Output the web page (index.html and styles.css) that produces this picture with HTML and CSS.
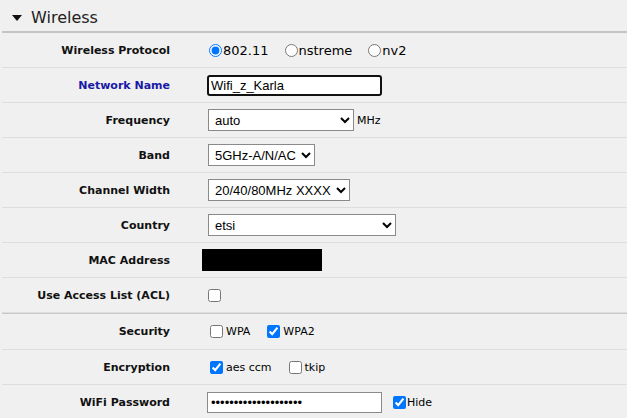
FILE: index.html
```html
<!DOCTYPE html>
<html lang="en">
<head>
    <meta charset="UTF-8">
    <title>Wireless</title>
    <link rel="stylesheet" href="styles.css">
</head>
<body>
    <div class="section-head">
        <span class="caret"></span>
        <span class="section-title">Wireless</span>
    </div>

    <div class="form">
        <div class="row">
            <label class="label">Wireless Protocol</label>
            <div class="field">
                <label class="opt"><input type="radio" name="proto" checked>802.11</label>
                <label class="opt"><input type="radio" name="proto">nstreme</label>
                <label class="opt"><input type="radio" name="proto">nv2</label>
            </div>
        </div>
        <div class="row">
            <label class="label highlight">Network Name</label>
            <div class="field">
                <input type="text" class="text-input focused" value="Wifi_z_Karla">
            </div>
        </div>
        <div class="row">
            <label class="label">Frequency</label>
            <div class="field">
                <select class="select sel-freq"><option>auto</option></select>
                <span class="unit">MHz</span>
            </div>
        </div>
        <div class="row">
            <label class="label">Band</label>
            <div class="field">
                <select class="select"><option>5GHz-A/N/AC</option></select>
            </div>
        </div>
        <div class="row">
            <label class="label">Channel Width</label>
            <div class="field">
                <select class="select"><option>20/40/80MHz XXXX</option></select>
            </div>
        </div>
        <div class="row">
            <label class="label">Country</label>
            <div class="field">
                <select class="select sel-country"><option>etsi</option></select>
            </div>
        </div>
        <div class="row">
            <label class="label">MAC Address</label>
            <div class="field">
                <div class="redacted"></div>
            </div>
        </div>
        <div class="row">
            <label class="label">Use Access List (ACL)</label>
            <div class="field">
                <input type="checkbox" class="check">
            </div>
        </div>
        <div class="row group-start">
            <label class="label">Security</label>
            <div class="field small">
                <label class="opt"><input type="checkbox" class="check">WPA</label>
                <label class="opt"><input type="checkbox" class="check" checked>WPA2</label>
            </div>
        </div>
        <div class="row">
            <label class="label">Encryption</label>
            <div class="field small">
                <label class="opt"><input type="checkbox" class="check" checked>aes ccm</label>
                <label class="opt"><input type="checkbox" class="check">tkip</label>
            </div>
        </div>
        <div class="row">
            <label class="label">WiFi Password</label>
            <div class="field">
                <input type="password" class="text-input" value="xxxxxxxxxxxxxxxxxxxx">
                <label class="opt hide"><input type="checkbox" class="check" checked>Hide</label>
            </div>
        </div>
    </div>
</body>
</html>
```

FILE: styles.css
```css
* {
    box-sizing: border-box;
}

body {
    margin: 0;
    background-color: #f0f0f0;
    color: #000;
    font-family: "DejaVu Sans", Verdana, sans-serif;
    overflow: hidden;
}

/* Section header */
.section-head {
    height: 33px;
    display: flex;
    align-items: center;
    padding-left: 10px;
    padding-top: 4px;
    margin-left: 2px;
    border-bottom: 2px solid #c4c4c4;
}

.caret {
    width: 0;
    height: 0;
    border-left: 5px solid transparent;
    border-right: 5px solid transparent;
    border-top: 6px solid #111;
    margin-right: 9px;
    margin-top: 1px;
}

.section-title {
    font-size: 16px;
    color: #222;
}

/* Form rows */
.row {
    display: flex;
    align-items: center;
    height: 35px;
    margin-left: 2px;
    border-bottom: 1px solid #dedede;
}

.row.group-start {
    border-top: 1px solid #c8c8c8;
    height: 37px;
}

.label {
    width: 168px;
    flex-shrink: 0;
    text-align: right;
    font-size: 11px;
    font-weight: bold;
    color: #111;
}

.label.highlight {
    color: #1a1aa6;
}

.field {
    display: flex;
    align-items: center;
    padding-left: 37px;
    font-size: 13px;
}

.field.small {
    font-size: 11px;
}

.opt {
    display: flex;
    align-items: center;
    margin-right: 14px;
}

.opt input {
    margin: 0 1px 0 2px;
}

.field.small .opt input {
    margin: 0 3px 0 3px;
}

input[type="radio"] {
    width: 13px;
    height: 13px;
}

.check {
    width: 13px;
    height: 13px;
    margin: 0 0 0 1px;
}

.text-input {
    width: 175px;
    height: 21px;
    font-family: "Liberation Sans", Arial, sans-serif;
    font-size: 13px;
    border: 1px solid #8a8a8a;
    background: #fff;
    padding: 0 3px;
}

.text-input.focused {
    border: 2px solid #111;
    border-radius: 3px;
    padding: 0 2px;
}

.select {
    height: 22px;
    font-family: "Liberation Sans", Arial, sans-serif;
    font-size: 13px;
    border: 1px solid #8a8a8a;
    background: #fff;
    padding: 0 2px;
    margin-left: 1px;
}

.sel-freq {
    width: 146px;
}

.sel-country {
    width: 188px;
}

.unit {
    font-size: 11px;
    margin-left: 3px;
}

.redacted {
    width: 120px;
    height: 22px;
    background: #000;
    margin-left: -5px;
}

.opt.hide {
    margin-left: 9px;
    font-size: 11px;
}
```
